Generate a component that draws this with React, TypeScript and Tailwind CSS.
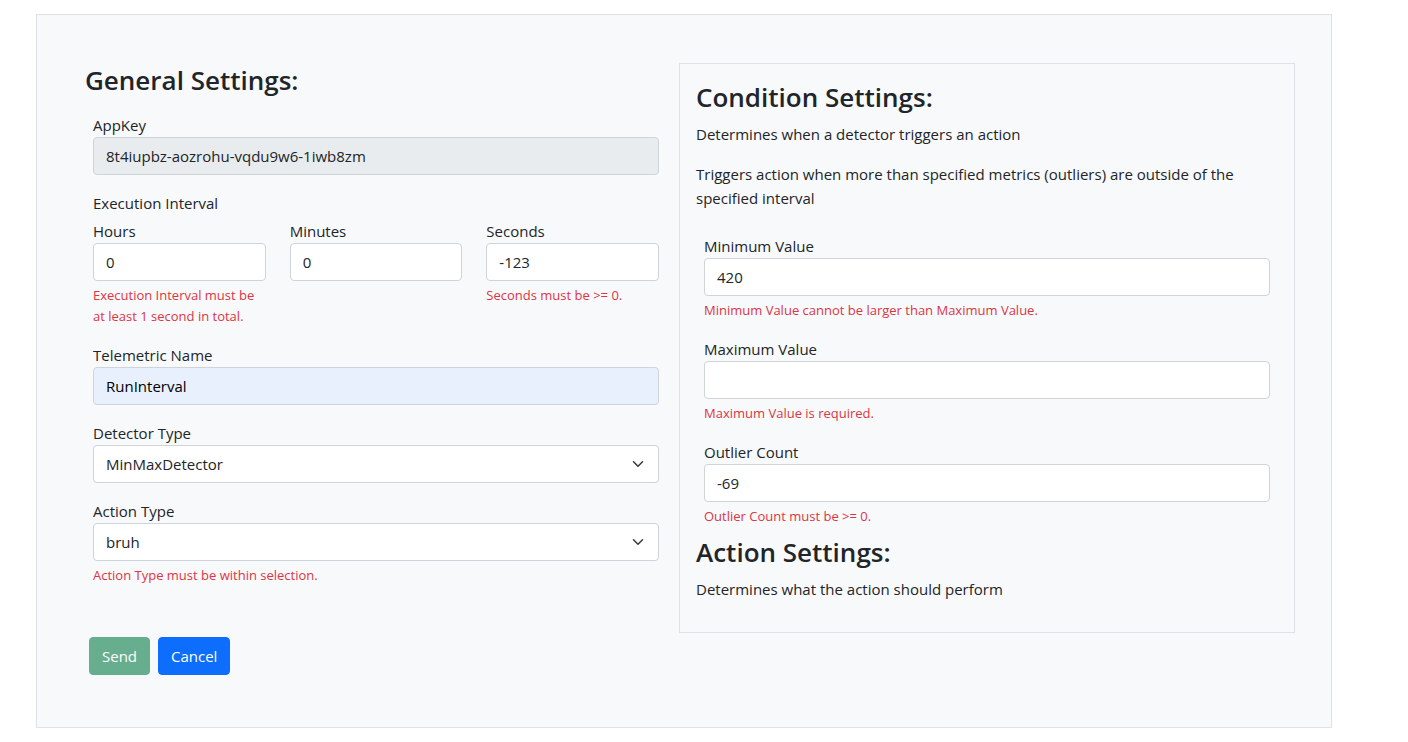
import { useState, type ReactNode } from "react";

const control =
  "block h-[38px] w-full rounded border border-[#ced4da] px-3 text-[15px] leading-6 outline-none focus:border-[#86b7fe]";

function Heading({ children }: { children: ReactNode }) {
  return <h3 className="mb-2 text-[26px] leading-[34px] font-semibold">{children}</h3>;
}

function ErrorText({ children }: { children: ReactNode }) {
  return <div className="mt-1 text-[13px] leading-[21px] text-[#dc3545]">{children}</div>;
}

type FieldProps = {
  id: string;
  label: string;
  error?: string;
  children: ReactNode;
};

function Field({ id, label, error, children }: FieldProps) {
  return (
    <div className="min-w-0">
      <label htmlFor={id} className="block">
        {label}
      </label>
      {children}
      {error && <ErrorText>{error}</ErrorText>}
    </div>
  );
}

type TextFieldProps = {
  id: string;
  label: string;
  initial: string;
  error?: string;
  tone?: string;
  readOnly?: boolean;
};

function TextField({ id, label, initial, error, tone = "bg-white", readOnly }: TextFieldProps) {
  const [value, setValue] = useState(initial);
  return (
    <Field id={id} label={label} error={error}>
      <input
        id={id}
        type="text"
        className={`${control} ${tone}`}
        value={value}
        readOnly={readOnly}
        onChange={(e) => setValue(e.target.value)}
      />
    </Field>
  );
}

function SelectField({ id, label, options, error }: { id: string; label: string; options: string[]; error?: string }) {
  return (
    <Field id={id} label={label} error={error}>
      <div className="relative">
        <select id={id} className={`${control} appearance-none bg-white pr-9`}>
          {options.map((o) => (
            <option key={o}>{o}</option>
          ))}
        </select>
        <svg
          viewBox="0 0 16 16"
          className="pointer-events-none absolute inset-y-0 right-[15px] my-auto size-3"
          fill="none"
          stroke="#343a40"
          strokeWidth="2"
          strokeLinecap="round"
          strokeLinejoin="round"
          aria-hidden="true"
        >
          <path d="m2 5 6 6 6-6" />
        </svg>
      </div>
    </Field>
  );
}

export default function App() {
  return (
    <main className="mt-[14px] mr-[76px] ml-9 border border-[#dee2e6] bg-[#f8f9fa] py-12 pr-9 pl-[26px] font-['Open_Sans','Noto_Sans',sans-serif] text-[15px] leading-6 text-[#212529]">
      <form onSubmit={(e) => e.preventDefault()}>
        <div className="grid grid-cols-2">
          <section className="pr-3 pl-[22px]">
            <Heading>General Settings:</Heading>
            <div className="flex flex-col gap-4 p-2">
              <TextField
                id="app-key"
                label="AppKey"
                initial="8t4iupbz-aozrohu-vqdu9w6-1iwb8zm"
                tone="bg-[#e9ecef]"
                readOnly
              />
              <fieldset>
                <legend className="mb-1">Execution Interval</legend>
                <div className="grid grid-cols-3 gap-6">
                  <TextField
                    id="hours"
                    label="Hours"
                    initial="0"
                    error="Execution Interval must be at least 1 second in total."
                  />
                  <TextField id="minutes" label="Minutes" initial="0" />
                  <TextField id="seconds" label="Seconds" initial="-123" error="Seconds must be >= 0." />
                </div>
              </fieldset>
              <TextField
                id="telemetric-name"
                label="Telemetric Name"
                initial="RunInterval"
                tone="bg-[#e8f0fe] text-black"
              />
              <SelectField id="detector-type" label="Detector Type" options={["MinMaxDetector"]} />
              <SelectField
                id="action-type"
                label="Action Type"
                options={["bruh"]}
                error="Action Type must be within selection."
              />
            </div>
          </section>

          <section className="border border-[#dee2e6] px-4 pt-4 pb-[15px]">
            <Heading>Condition Settings:</Heading>
            <p className="mb-4">Determines when a detector triggers an action</p>
            <p className="mb-4">
              Triggers action when more than specified metrics (outliers) are outside of the specified interval
            </p>
            <div className="flex flex-col gap-4 p-2">
              <TextField
                id="minimum-value"
                label="Minimum Value"
                initial="420"
                error="Minimum Value cannot be larger than Maximum Value."
              />
              <TextField id="maximum-value" label="Maximum Value" initial="" error="Maximum Value is required." />
              <TextField id="outlier-count" label="Outlier Count" initial="-69" error="Outlier Count must be >= 0." />
            </div>
            <Heading>Action Settings:</Heading>
            <p className="mb-4">Determines what the action should perform</p>
          </section>
        </div>

        <div className="flex gap-2 py-1 pl-[26px]">
          <button
            type="submit"
            disabled
            className="h-[38px] rounded border border-[#198754] bg-[#198754] px-3 text-white opacity-65"
          >
            Send
          </button>
          <button type="button" className="h-[38px] rounded border border-[#0d6efd] bg-[#0d6efd] px-3 text-white">
            Cancel
          </button>
        </div>
      </form>
    </main>
  );
}
